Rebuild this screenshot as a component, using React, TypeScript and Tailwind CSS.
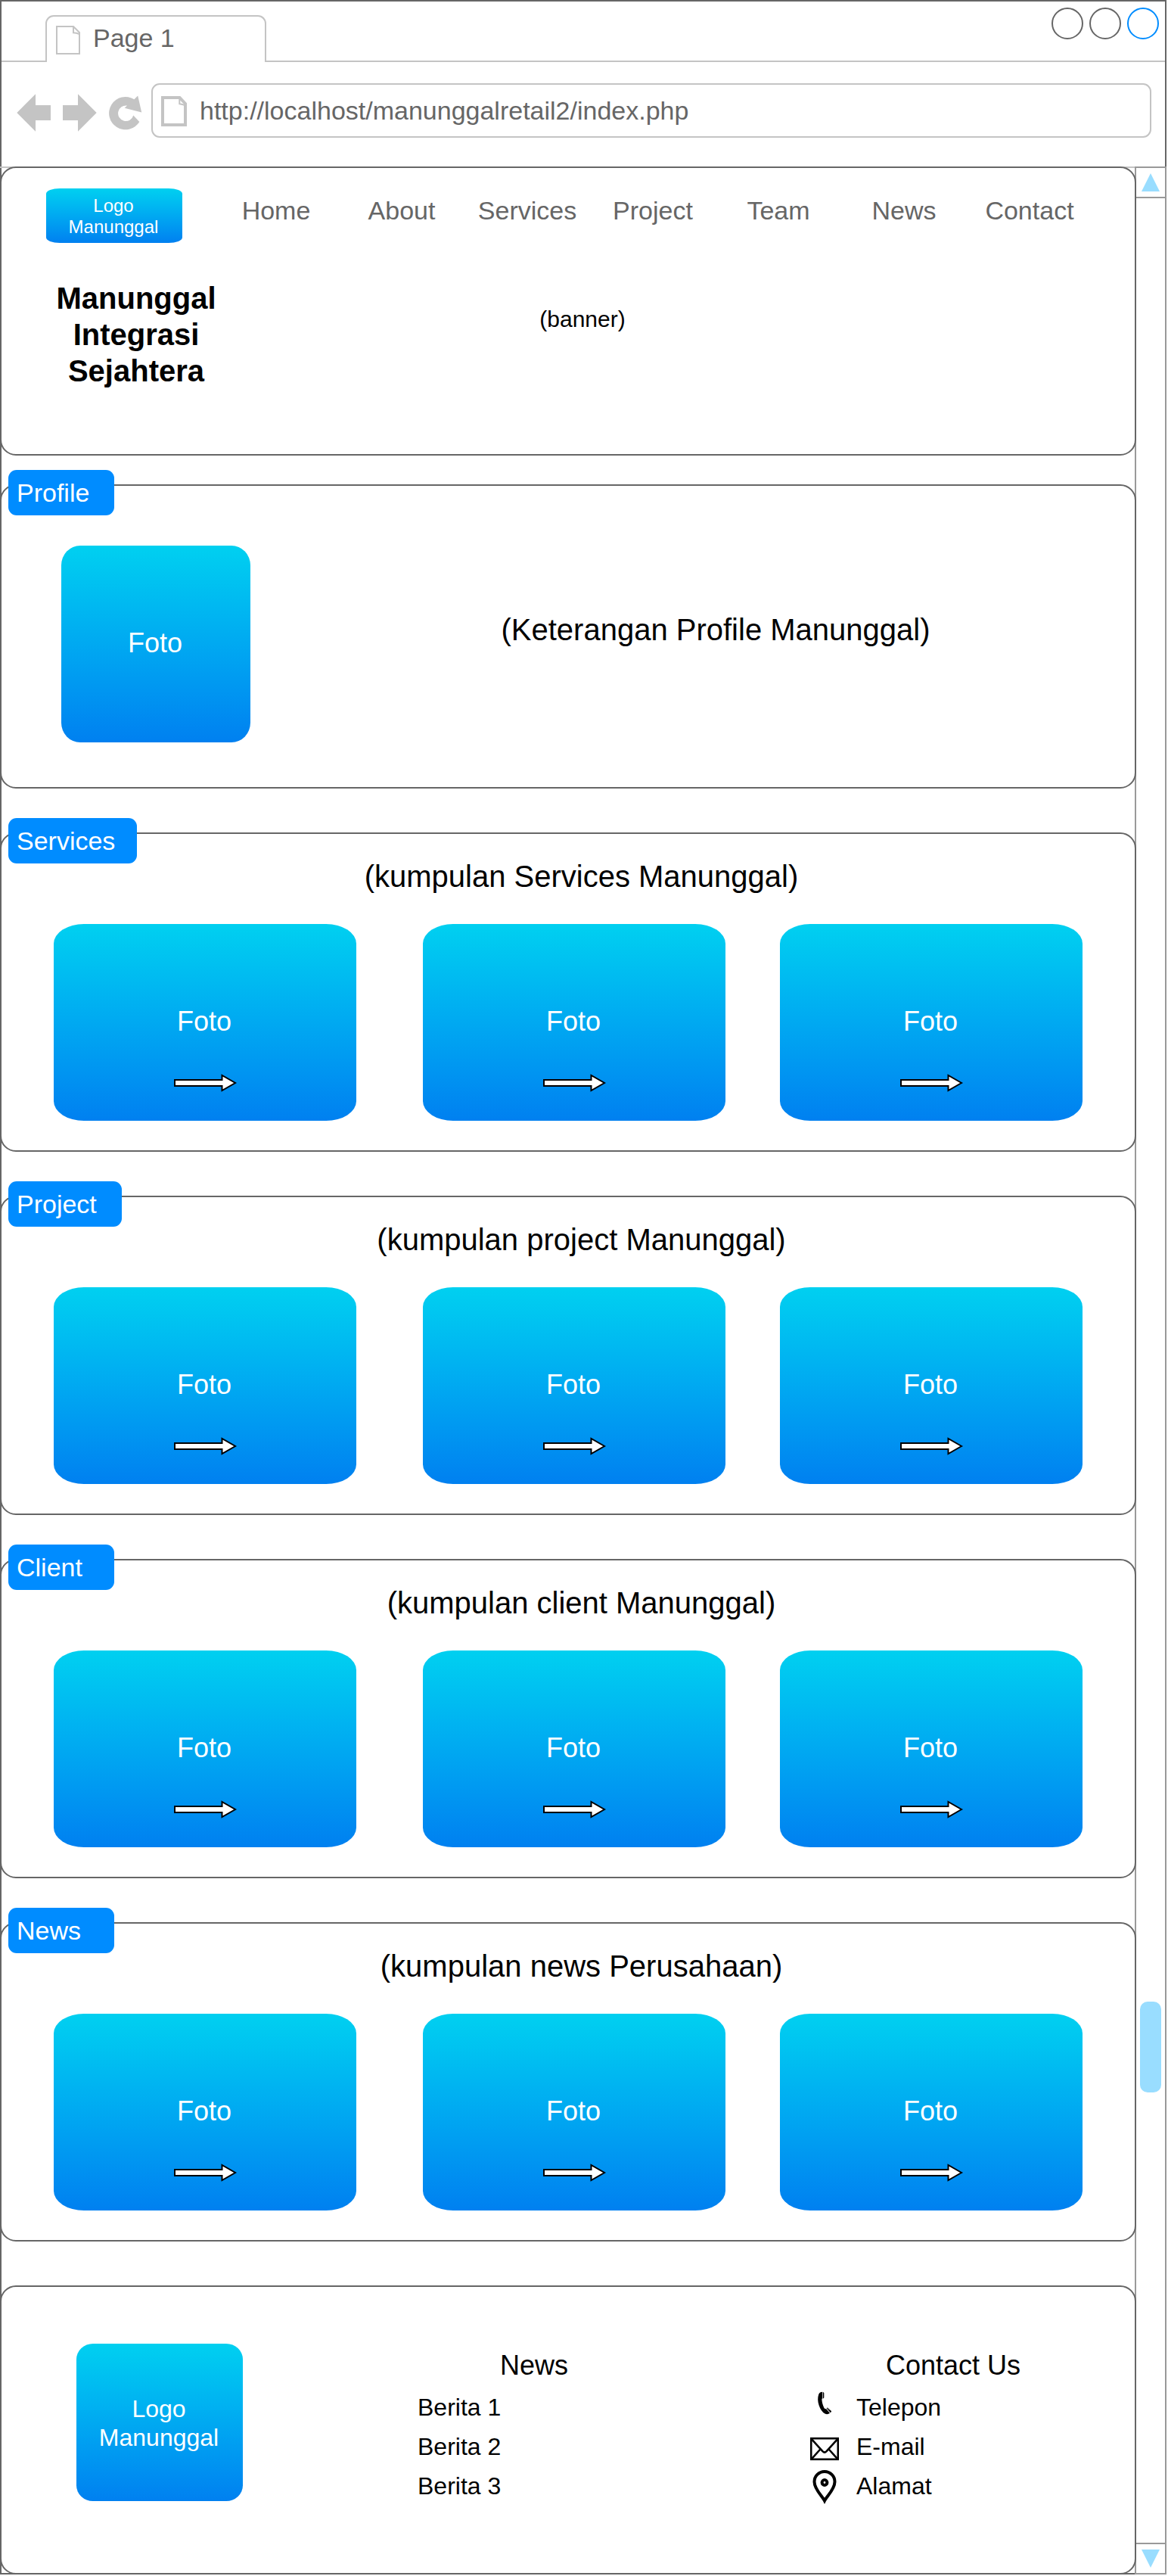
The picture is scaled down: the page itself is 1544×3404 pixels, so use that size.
import React from "react";

const GRADIENT = "bg-linear-to-b from-[#00d0f0] to-[#0080f0] rounded-[10%] text-white";

function PageIcon({ bold = false }: { bold?: boolean }) {
  return bold ? (
    <svg width="34" height="40" viewBox="0 0 34 40" fill="none" stroke="#c4c4c4">
      <path d="M2 2H24.5L32 10V38H2Z" strokeWidth="4" />
      <path d="M24.3 2V10.2Q28 10.6 32 12.2" strokeWidth="2" />
    </svg>
  ) : (
    <svg width="32" height="38" viewBox="0 0 32 38" fill="none" stroke="#c4c4c4" strokeWidth="2">
      <path d="M1 1H23L31 9V37H1Z" />
      <path d="M23 1V9.2Q27 9.4 31 11" />
    </svg>
  );
}

function TabBar() {
  return (
    <div className="flex h-20">
      <div className="w-[58px] border-b-2 border-[#c4c4c4]" />
      <div className="mt-[18px] flex w-[292px] items-start rounded-t-[11px] border-2 border-b-0 border-[#c4c4c4] pl-3 pt-3">
        <PageIcon />
        <span className="-mt-px ml-[17px] text-[34px] leading-[34px] text-[#666]">Page 1</span>
      </div>
      <div className="flex flex-1 items-start justify-end gap-2 border-b-2 border-[#c4c4c4] pr-2 pt-2">
        <div className="size-[42px] rounded-full border-2 border-[#666]" />
        <div className="size-[42px] rounded-full border-2 border-[#666]" />
        <div className="size-[42px] rounded-full border-2 border-[#008cff]" />
      </div>
    </div>
  );
}

function Toolbar() {
  return (
    <div className="flex h-[138px] items-start pl-5 pt-7">
      <svg className="mt-3" width="168" height="54" viewBox="22 122 168 54" fill="#c4c4c4">
        <path d="M22.3 149L47 124.2V139H67V159H47V173.8Z" />
        <path d="M127.7 149L103 124.2V139H83V159H103V173.8Z" />
        <path d="M177.4 131.3A21.7 21.7 0 1 0 184.3 161L176.3 152.6A10.3 10.3 0 1 1 168 139.6L164.7 142.8L187.2 148.4L182.2 126.6Z" />
      </svg>
      <div className="ml-2.5 flex h-[72px] w-[1322px] items-start rounded-[11px] border-2 border-[#c4c4c4] pl-[11px] pt-[15px]">
        <PageIcon bold />
        <span className="ml-[17px] text-[34px] leading-[38px] text-[#666]">
          http://localhost/manunggalretail2/index.php
        </span>
      </div>
    </div>
  );
}

function Panel({ className, tag, tagClass, children }: {
  className: string;
  tag?: string;
  tagClass?: string;
  children: React.ReactNode;
}) {
  return (
    <section className={`relative shrink-0 rounded-[21px] border-2 border-[#666] bg-white ${className}`}>
      {tag && (
        <div className={`absolute -top-[21px] left-[9px] flex h-[60px] items-center rounded-[11px] bg-[#008cff] pl-[11px] text-[34px] text-white ${tagClass}`}>
          {tag}
        </div>
      )}
      {children}
    </section>
  );
}

const NAV = ["Home", "About", "Services", "Project", "Team", "News", "Contact"];

function Banner() {
  return (
    <Panel className="h-[382px] pl-[59px] pt-[27px]">
      <div className="flex items-start">
        <div className={`flex h-[72px] w-[180px] flex-col items-center justify-center pr-0.5 pt-px text-[24px] leading-7 ${GRADIENT}`}>
          <span>Logo</span>
          <span>Manunggal</span>
        </div>
        <nav className="ml-[41px] mt-[9px] grid w-[1162px] grid-cols-7 text-center text-[34px] leading-10 text-[#666]">
          {NAV.map((n) => (
            <span key={n}>{n}</span>
          ))}
        </nav>
      </div>
      <div className="mt-[49px] flex items-start">
        <h1 className="w-60 pr-0.5 text-center text-[40px] font-bold leading-[48px]">
          Manunggal
          <br />
          Integrasi
          <br />
          Sejahtera
        </h1>
        <p className="ml-[369px] mt-[34px] w-[200px] text-center text-[30px] leading-9">(banner)</p>
      </div>
    </Panel>
  );
}

function Profile() {
  return (
    <Panel className="mt-[38px] flex h-[402px] items-start pl-[79px] pt-[79px]" tag="Profile" tagClass="w-[140px]">
      <div className={`flex h-[260px] w-[250px] items-center justify-center pb-[3px] pr-0.5 text-[36px] ${GRADIENT}`}>Foto</div>
      <p className="ml-[315px] mt-[87px] w-[600px] whitespace-nowrap text-center text-[40px] leading-[48px]">
        (Keterangan Profile Manunggal)
      </p>
    </Panel>
  );
}

function Card({ className = "" }: { className?: string }) {
  return (
    <div className={`relative flex h-[260px] w-[400px] items-center justify-center pb-[3px] pr-0.5 text-[36px] ${GRADIENT} ${className}`}>
      Foto
      <svg className="absolute left-[157px] top-[196px]" width="86" height="28" viewBox="-2 -14 86 28">
        <path d="M1 -4H63.5V-10L81 0L63.5 10V4H1Z" fill="#fff" stroke="#000" strokeWidth="2" />
      </svg>
    </div>
  );
}

function Gallery({ tag, tagClass, title }: { tag: string; tagClass: string; title: string }) {
  return (
    <Panel className="mt-[58px] h-[422px] pt-8" tag={tag} tagClass={tagClass}>
      <h2 className="pl-[35px] text-center text-[40px] leading-[48px]">{title}</h2>
      <div className="mt-[39px] flex pl-[69px]">
        <Card />
        <Card className="ml-[88px]" />
        <Card className="ml-[72px]" />
      </div>
    </Panel>
  );
}

function PhoneIcon() {
  return (
    <svg width="38" height="52" viewBox="0 0 38 52">
      <path d="M16.2 5.8C13.6 5.8 12.2 6.8 11.2 9C9.8 13 9.8 18 11.6 23.4C13.4 28.6 16 32.6 20 34.8C22 35.6 24.4 35.2 26 33.8L21 28C19.6 28.6 18.8 27.6 18 26C16.4 22.6 15.4 18.6 15.4 14.8L16.2 14.6Z" />
      <path d="M16.9 6Q18.3 6.4 18.3 7.4V13Q18.3 14.2 16.9 14.4Z" />
      <path d="M21.7 27.4Q22.6 26.2 23.6 26.8L28 31Q28.4 32 26.8 33.2Z" />
      <path d="M25.4 29.6L22.8 27L24 26.6L27.8 30.6" fill="none" stroke="#fff" strokeWidth="0.5" />
    </svg>
  );
}

function MailIcon() {
  return (
    <svg width="38" height="52" viewBox="0 0 38 52" fill="none" stroke="#000" strokeWidth="2.6">
      <rect x="1.2" y="15.2" width="35.6" height="27.6" />
      <path d="M1.6 15.8L16.6 32.4Q19 34.8 21.4 32.4L36.4 15.8M1.6 42.6L13.8 29M36.4 42.6L24.2 29" />
    </svg>
  );
}

function PinIcon() {
  return (
    <svg width="38" height="52" viewBox="0 0 38 52" fill="none" stroke="#000">
      <path d="M19 45.6C16 39.6 5.5 30.4 5.5 20.5A13.5 13.5 0 0 1 32.5 20.5C32.5 30.4 22 39.6 19 45.6Z" strokeWidth="4" />
      <circle cx="19" cy="21.5" r="3.4" strokeWidth="4" />
    </svg>
  );
}

function Footer() {
  return (
    <Panel className="mt-[58px] flex h-[382px] items-start pl-[99px] pt-[75px]">
      <div className={`flex h-[208px] w-[220px] flex-col items-center justify-center pr-0.5 pt-0.5 text-[32px] leading-[38px] ${GRADIENT}`}>
        <span>Logo</span>
        <span>Manunggal</span>
      </div>
      <div className="ml-[230px] mt-[5px] w-[310px]">
        <h3 className="mb-[5px] text-center text-[36px] leading-[48px]">News</h3>
        <ul className="pl-px text-[32px] leading-[52px]">
          <li>Berita 1</li>
          <li>Berita 2</li>
          <li>Berita 3</li>
        </ul>
      </div>
      <div className="ml-[210px] mt-[5px] w-[378px]">
        <h3 className="mb-[5px] text-center text-[36px] leading-[48px]">Contact Us</h3>
        <ul className="text-[32px] leading-[52px]">
          <li className="flex gap-[23px]"><PhoneIcon />Telepon</li>
          <li className="flex gap-[23px]"><MailIcon />E-mail</li>
          <li className="flex gap-[23px]"><PinIcon />Alamat</li>
        </ul>
      </div>
    </Panel>
  );
}

function Scrollbar() {
  return (
    <div className="-ml-0.5 flex w-[42px] flex-col border-2 border-[#999]">
      <div className="flex h-10 items-center justify-center border-b-2 border-[#999]">
        <svg width="24" height="24" viewBox="0 0 24 24"><path d="M12 0L24 24H0Z" fill="#9df" /></svg>
      </div>
      <div className="flex-1 pt-[2383px]">
        <div className="mx-auto h-[120px] w-7 rounded-[10px] bg-[#99ddff]" />
      </div>
      <div className="flex h-10 items-start justify-center border-t-2 border-[#999] pt-[7px]">
        <svg width="24" height="24" viewBox="0 0 24 24"><path d="M0 0H24L12 24Z" fill="#9df" /></svg>
      </div>
    </div>
  );
}

export default function App() {
  return (
    <div className="h-[3404px] w-[1544px] overflow-hidden bg-white font-['Liberation_Sans',Arial,sans-serif] text-black">
      <div className="h-[3402px] w-[1542px] border-2 border-[#666]">
        <TabBar />
        <Toolbar />
        <div className="-mx-0.5 h-[3182px] border-t-2 border-[#c4c4c4]">
          <div className="-mt-0.5 flex h-[3182px]">
            <main className="relative z-10 flex w-[1502px] flex-col">
              <Banner />
              <Profile />
              <Gallery tag="Services" tagClass="w-[170px]" title="(kumpulan Services Manunggal)" />
              <Gallery tag="Project" tagClass="w-[150px]" title="(kumpulan project Manunggal)" />
              <Gallery tag="Client" tagClass="w-[140px]" title="(kumpulan client Manunggal)" />
              <Gallery tag="News" tagClass="w-[140px]" title="(kumpulan news Perusahaan)" />
              <Footer />
            </main>
            <Scrollbar />
          </div>
        </div>
      </div>
    </div>
  );
}
